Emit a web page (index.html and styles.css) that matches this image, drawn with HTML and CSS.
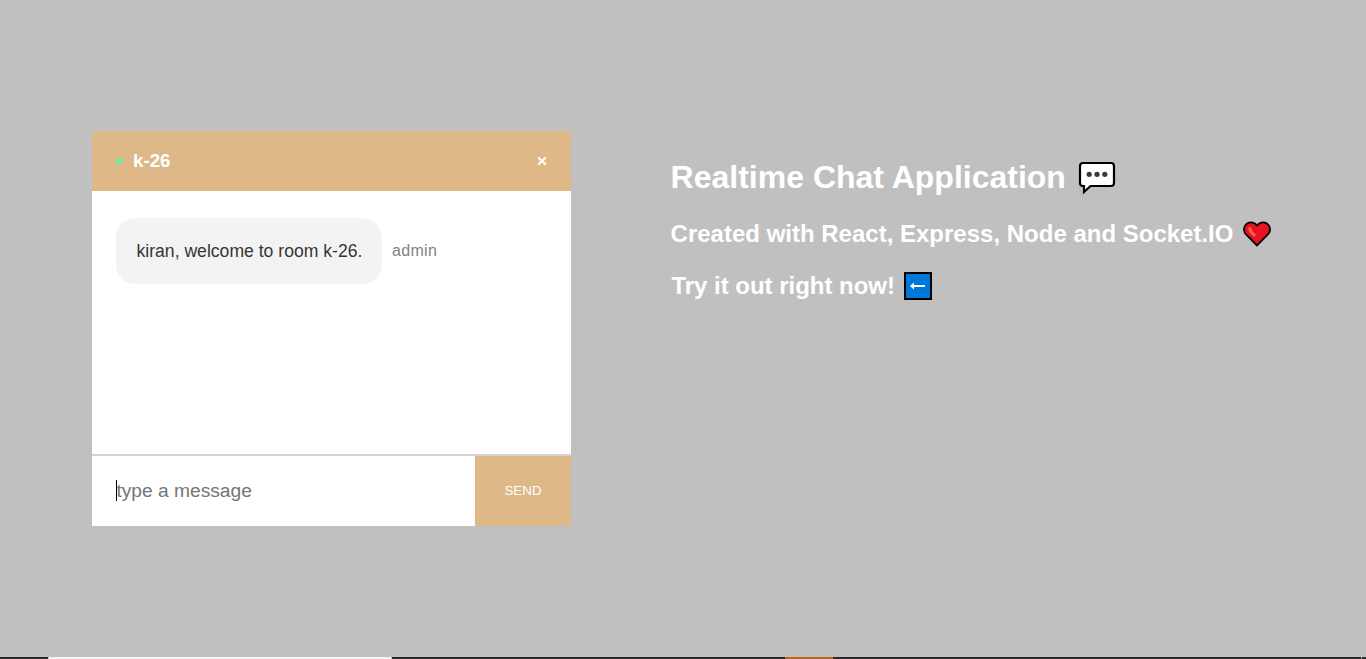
FILE: index.html
```html
<!DOCTYPE html>
<html lang="en">
<head>
<meta charset="utf-8">
<title>Realtime Chat Application</title>
<link rel="stylesheet" href="styles.css">
</head>
<body>
<div class="page">
  <main class="outer">
    <section class="chat">
      <header class="info-bar">
        <div class="room">
          <svg class="online" viewBox="0 0 6 6"><circle cx="3" cy="3" r="3"/></svg>
          <h3 class="room-name">k-26</h3>
        </div>
        <svg class="close" viewBox="0 0 10 10"><path d="M1.200 1.200L8.800 8.800M8.800 1.200L1.200 8.800"/></svg>
      </header>
      <div class="messages">
        <div class="message">
          <p class="bubble">kiran, welcome to room k-26.</p>
          <p class="sender">admin</p>
        </div>
      </div>
      <div class="composer">
        <div class="field"><span class="caret"></span><span class="placeholder">type a message</span></div>
        <div class="send">SEND</div>
      </div>
    </section>
    <section class="intro">
      <h1 class="title"><span class="title-text">Realtime Chat Application</span>
        <svg class="speech" viewBox="0 0 38 34"><path d="M5 2H33Q36 2 36 5V22Q36 25 33 25H12.500L6 31V25H5Q2 25 2 22V5Q2 2 5 2Z" fill="#fff" stroke="#000" stroke-width="2.200"/><g fill="#383838"><circle cx="11.200" cy="13.300" r="2.600"/><circle cx="19" cy="13.300" r="2.600"/><circle cx="26.800" cy="13.300" r="2.600"/></g></svg>
      </h1>
      <h2 class="line created"><span class="created-text">Created with React, Express, Node and Socket.IO</span>
        <svg class="heart" viewBox="0 0 28 26"><path d="M14 24.500L2.600 13C.3 10.200.5 5.800 3 3.300C6.200.3 11 .8 14 4.400C17 .8 21.800.3 25 3.300C27.500 5.800 27.700 10.200 25.400 13Z" fill="#e81224" stroke="#000" stroke-width="1.800"/><path d="M6.800 7.600Q7.400 11.200 11.200 14" fill="none" stroke="#f5603e" stroke-width="3" stroke-linecap="round"/></svg>
      </h2>
      <h2 class="line try"><span class="try-text">Try it out right now!</span>
        <svg class="arrow" viewBox="0 0 28 28"><path d="M1 1H27V27H1Z" fill="#0078d7" stroke="#000" stroke-width="2"/><path d="M8 14H21" stroke="#fff" stroke-width="2"/><path d="M6 14L10 10.500V17.500Z" fill="#fff"/></svg>
      </h2>
    </section>
  </main>
  <footer class="taskbar"><i class="dark left"></i><i class="light"></i><i class="dark mid"></i><i class="orange"></i><i class="dark right"></i><i class="edge"></i><i class="dark corner"></i></footer>
</div>
</body>
</html>
```
FILE: styles.css
```css
* { box-sizing: border-box; }
body { margin: 0; font-family: "Liberation Sans", Arial, sans-serif; background: #c0c0c0; }
h1, h2, h3, p { margin: 0; white-space: nowrap; }
svg { display: block; flex: none; }
.page { height: 659px; display: flex; flex-direction: column; overflow: hidden; }
.outer { flex: 1; display: flex; align-items: flex-start; padding: 131px 0 0 92px; gap: 99.6px; }
.chat { width: 479px; height: 395px; display: flex; flex-direction: column; background: #fff; border-radius: 4px 4px 0 0; flex: none; }
.info-bar { height: 60px; display: flex; align-items: center; justify-content: space-between; padding: 0 24px; background: #deb887; border-radius: 4px 4px 0 0; color: #fff; }
.room { display: flex; align-items: center; gap: 11px; }
.online { width: 6px; height: 6px; fill: #6bf0ac; }
.room-name { font-size: 18.72px; line-height: 22px; padding-bottom: 1px; }
.close { width: 10px; height: 10px; stroke: #fff; stroke-width: 2; }
.messages { flex: 1; padding: 27px 24px 0; }
.message { display: flex; align-items: center; }
.bubble { width: 266px; height: 66px; border-radius: 20px; background: #f3f3f3; color: #353535; font-size: 17.6px; line-height: 66px; padding-left: 20.5px; }
.sender { margin-left: 10px; color: #828282; font-size: 16px; line-height: 66px; letter-spacing: 0.3px; }
.composer { height: 72px; display: flex; border-top: 2px solid #d3d3d3; }
.field { flex: 1; display: flex; align-items: center; padding-left: 24px; font-size: 19.2px; color: #757575; }
.caret { width: 1px; height: 21px; margin: 0 -1px 1px 0; background: #000; }
.placeholder { padding-left: 0.4px; }
.send { width: 96px; background: #deb887; color: #fff; font-size: 13.333px; line-height: 69px; text-align: center; }
.intro { color: #fff; padding-top: 28px; }
.title, .line { display: flex; align-items: center; }
.title { height: 37px; font-size: 32px; gap: 12.5px; }
.line { font-size: 24px; height: 28px; }
.created { margin-top: 24px; gap: 9.5px; }
.try { margin-top: 24px; gap: 9px; padding-left: 0.8px; }
.try-text { letter-spacing: -0.02px; }
.speech { width: 38px; height: 34px; }
.heart { width: 28px; height: 26px; }
.arrow { width: 28px; height: 28px; }
.taskbar { height: 2px; display: flex; }
.dark { background: #2b292b; }
.left { width: 48px; }
.light { width: 344px; background: #f3f3f3; border-left: 1px solid #c0c0c0; border-right: 1px solid #c0c0c0; }
.mid { width: 393px; }
.orange { width: 48px; background: #b5642a; }
.right { width: 528px; }
.edge { width: 1px; background: #999; }
.corner { flex: 1; }
```
